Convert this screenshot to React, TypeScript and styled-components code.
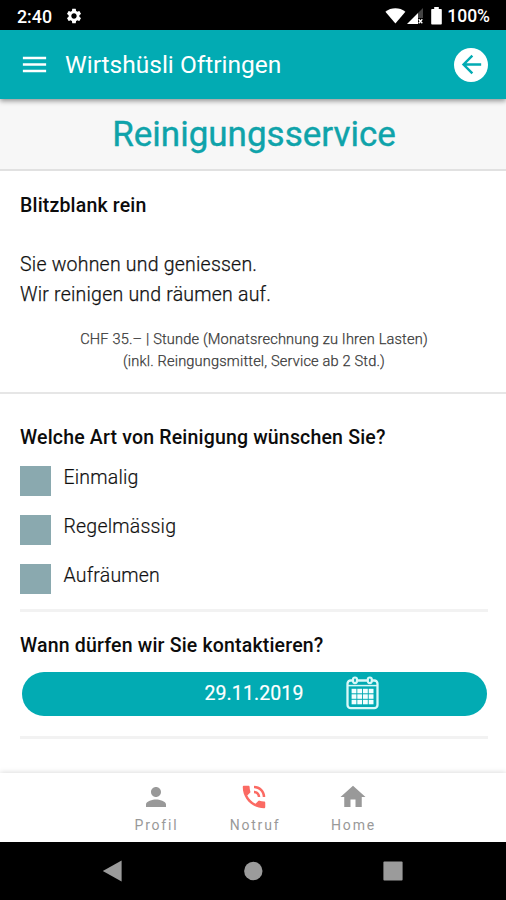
import React from "react";
import styled, { createGlobalStyle } from "styled-components";
import { MdArrowBack, MdHome, MdMenu, MdPerson, MdPhoneInTalk, MdSettings } from "react-icons/md";

const TEAL = "#02abb3";

const GlobalStyle = createGlobalStyle`
  *, *::before, *::after { box-sizing: border-box; }
  body {
    margin: 0;
    background: #fff;
    color: #0c0c0c;
    font-family: Roboto, "Liberation Sans", sans-serif;
  }
  h1, h2, p { margin: 0; }
  button { border: 0; padding: 0; background: none; font: inherit; color: inherit; }
  svg { display: block; flex: none; }
`;

const Screen = styled.div`
  display: flex;
  flex-direction: column;
  width: 506px;
  height: 900px;
  overflow: hidden;
  background: #fff;
`;

const StatusBar = styled.div`
  display: flex;
  flex: none;
  align-items: center;
  height: 30px;
  padding: 2px 16px 0 17px;
  background: #000;
  color: #fff;
  font-weight: 500;
`;

const Clock = styled.span`
  width: 48px;
  font-size: 17.8px;
`;

const StatusIcons = styled.div`
  display: flex;
  align-items: center;
  margin-left: auto;
`;

const SignalSlot = styled.span`
  margin: 0 7px 0 1px;
`;

const BatteryLevel = styled.span`
  margin-left: 5px;
  font-size: 17.5px;
  line-height: 20px;
`;

const AppBar = styled.header`
  position: relative;
  z-index: 1;
  display: flex;
  flex: none;
  align-items: center;
  height: 69px;
  padding: 0 18px 0 19px;
  background: ${TEAL};
  color: #fff;
  box-shadow: 0 2px 5px rgba(0, 0, 0, 0.42);
`;

const AppTitle = styled.span`
  flex: 1;
  margin-left: 15px;
  padding-top: 1px;
  font-size: 24.5px;
  line-height: 30px;
`;

const BackButton = styled.button`
  display: grid;
  place-items: center;
  width: 34px;
  height: 34px;
  border-radius: 50%;
  background: #fff;
  color: ${TEAL};
`;

const HeadingBand = styled.div`
  flex: none;
  height: 72px;
  padding: 15px 0 0 2px;
  border-bottom: 2px solid #e1e1e1;
  background: #f7f7f7;
`;

const Heading = styled.h1`
  color: #0fa3aa;
  font-size: 35px;
  font-weight: 400;
  line-height: 41px;
  text-align: center;
  -webkit-text-stroke: 0.4px #0fa3aa;
`;

const Intro = styled.section`
  flex: none;
  height: 223px;
  padding: 19px 20px 0;
  border-bottom: 2px solid #e6e6e6;
`;

const Question = styled.h2`
  font-size: 19.5px;
  font-weight: 500;
  line-height: 31px;
  letter-spacing: 0.18px;
`;

const Copy = styled.p`
  margin-top: 29px;
  font-size: 19.5px;
  font-weight: 300;
  line-height: 29.6px;
  letter-spacing: 0.22px;
  -webkit-text-stroke: 0.25px #222;
`;

const PriceNote = styled.p`
  margin: 19px -10px 0;
  padding-left: 2px;
  color: #333;
  font-size: 14.6px;
  font-weight: 300;
  line-height: 22px;
  letter-spacing: 0.17px;
  text-align: center;
  -webkit-text-stroke: 0.25px #444;
`;

const Form = styled.main`
  flex: 1;
  padding: 28px 18px 0 20px;
`;

const Options = styled.div`
  display: grid;
  gap: 19px;
  margin-top: 12.5px;
`;

const Option = styled.label`
  display: flex;
  height: 30.3px;
`;

const Box = styled.span`
  width: 31px;
  height: 100%;
  background: #8aa9af;
`;

const OptionText = styled.span`
  margin-left: 12.5px;
  font-size: 19.5px;
  font-weight: 300;
  line-height: 24px;
  letter-spacing: 0.2px;
  -webkit-text-stroke: 0.2px #222;
`;

const Divider = styled.hr<{ $top: number; $bottom: number }>`
  height: 3px;
  margin: ${(p) => p.$top}px 0 ${(p) => p.$bottom}px;
  border: 0;
  background: #f2f2f2;
`;

const DateButton = styled.button`
  display: flex;
  align-items: center;
  width: 465px;
  height: 44px;
  margin: 10.5px 0 0 2px;
  padding-left: 182.5px;
  border-radius: 22px;
  background: ${TEAL};
  color: #fff;

  svg {
    margin-top: -2px;
  }
`;

const DateText = styled.span`
  width: 141.5px;
  font-size: 19.5px;
  letter-spacing: 0.1px;
  text-align: left;
  -webkit-text-stroke: 0.2px #fff;
`;

const TabBar = styled.nav`
  display: flex;
  flex: none;
  justify-content: center;
  height: 69px;
  padding-left: 4px;
  background: #fff;
  box-shadow: 0 -1px 5px rgba(0, 0, 0, 0.13);
`;

const Tab = styled.a<{ $accent?: boolean }>`
  display: flex;
  flex-direction: column;
  align-items: center;
  width: 98.5px;
  padding-top: 9px;
  color: #999;
  font-size: 14px;
  line-height: 16px;
  letter-spacing: 1.8px;

  svg {
    width: 30px;
    height: 30px;
    margin-right: 2px;
    color: ${(p) => (p.$accent ? "#fb6a63" : "#999")};
  }
`;

const TabLabel = styled.span`
  margin-top: 5px;
`;

const SystemNav = styled.div`
  display: flex;
  flex: none;
  align-items: center;
  justify-content: space-between;
  height: 58px;
  padding: 0 103px 0 102px;
  background: #000;
`;

const WifiIcon = () => (
  <svg width="21" height="16" viewBox="0 0 21 16">
    <path d="M0.4 3.7C6.2-.9 14.6-.9 20.4 3.7L10.4 15.6Z" fill="#fff" />
  </svg>
);

const SignalIcon = () => (
  <svg width="17" height="16" viewBox="0 0 17 16">
    <path d="M16 0V10H11V5Z" fill="#444" />
    <path d="M0 16 11 5V16Z" fill="#fff" />
    <path d="m11.7 11.2 3.6 4m0-4-3.6 4" stroke="#fff" strokeWidth="1.3" />
  </svg>
);

const BatteryIcon = () => (
  <svg width="11" height="18" viewBox="0 0 11 18">
    <path d="M3.2 0h4.6v2H10q.8 0 .8.8v14q0 .8-.8.8H1q-.8 0-.8-.8v-14Q.2 2 1 2h2.2Z" fill="#fff" />
  </svg>
);

const CalendarIcon = () => (
  <svg width="33" height="34" viewBox="0 0 33 34" fill="none" stroke="#d9f8f8">
    <rect x="1.5" y="4.5" width="30" height="27.7" rx="3.2" strokeWidth="2.3" />
    <path d="M2 9.6h29" strokeWidth="1.5" />
    <rect x="7" y="1.5" width="4" height="5.6" rx="2" fill={TEAL} strokeWidth="2.2" />
    <rect x="21.8" y="1.5" width="4" height="5.6" rx="2" fill={TEAL} strokeWidth="2.2" />
    <g fill="#f2ffff" stroke="none">
      {[12.8, 18.3, 23.8].map((y) =>
        [5.6, 11.3, 17, 22.7].map((x) => (
          <rect key={`${x}-${y}`} x={x} y={y} width="4.8" height="4.5" />
        )),
      )}
    </g>
  </svg>
);

const options = ["Einmalig", "Regelmässig", "Aufräumen"];

const tabs = [
  { label: "Profil", Icon: MdPerson },
  { label: "Notruf", Icon: MdPhoneInTalk, accent: true },
  { label: "Home", Icon: MdHome },
];

export default function App() {
  return (
    <Screen>
      <GlobalStyle />
      <StatusBar>
        <Clock>2:40</Clock>
        <MdSettings size={18} />
        <StatusIcons>
          <WifiIcon />
          <SignalSlot>
            <SignalIcon />
          </SignalSlot>
          <BatteryIcon />
          <BatteryLevel>100%</BatteryLevel>
        </StatusIcons>
      </StatusBar>

      <AppBar>
        <MdMenu size={31} />
        <AppTitle>Wirtshüsli Oftringen</AppTitle>
        <BackButton aria-label="Zurück">
          <MdArrowBack size={29} />
        </BackButton>
      </AppBar>

      <HeadingBand>
        <Heading>Reinigungsservice</Heading>
      </HeadingBand>

      <Intro>
        <Question>Blitzblank rein</Question>
        <Copy>
          Sie wohnen und geniessen.
          <br />
          Wir reinigen und räumen auf.
        </Copy>
        <PriceNote>
          CHF 35.– | Stunde (Monatsrechnung zu Ihren Lasten)
          <br />
          (inkl. Reingungsmittel, Service ab 2 Std.)
        </PriceNote>
      </Intro>

      <Form>
        <Question>Welche Art von Reinigung wünschen Sie?</Question>
        <Options>
          {options.map((name) => (
            <Option key={name}>
              <Box />
              <OptionText>{name}</OptionText>
            </Option>
          ))}
        </Options>
        <Divider $top={15} $bottom={18} />
        <Question>Wann dürfen wir Sie kontaktieren?</Question>
        <DateButton>
          <DateText>29.11.2019</DateText>
          <CalendarIcon />
        </DateButton>
        <Divider $top={20.5} $bottom={0} />
      </Form>

      <TabBar>
        {tabs.map(({ label, Icon, accent }) => (
          <Tab key={label} $accent={accent}>
            <Icon />
            <TabLabel>{label}</TabLabel>
          </Tab>
        ))}
      </TabBar>

      <SystemNav>
        <svg width="20" height="22" viewBox="0 0 20 22">
          <path d="M.8 11 19.6.6V21.4Z" fill="#9b9b9b" />
        </svg>
        <svg width="20" height="20" viewBox="0 0 20 20">
          <circle cx="10.3" cy="10" r="9.2" fill="#9b9b9b" />
        </svg>
        <svg width="20" height="20" viewBox="0 0 20 20">
          <rect x=".4" y=".4" width="19.2" height="19.2" rx="1" fill="#9b9b9b" />
        </svg>
      </SystemNav>
    </Screen>
  );
}
